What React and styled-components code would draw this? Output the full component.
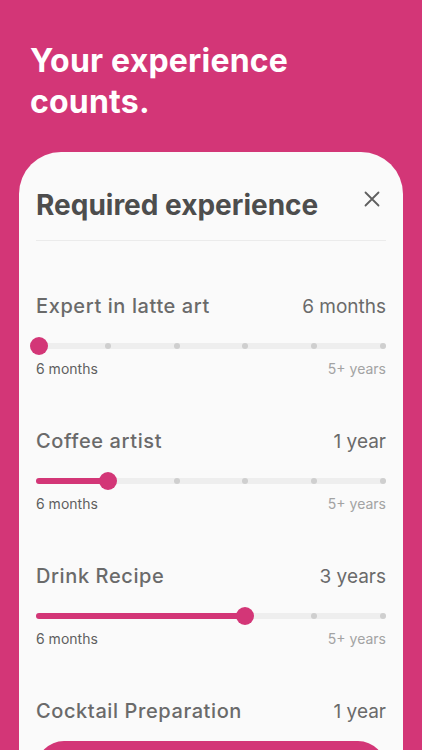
import React from "react";
import styled, { createGlobalStyle } from "styled-components";

const GlobalStyle = createGlobalStyle`
    html, body {
        margin: 0;
        padding: 0;
        background: #d33677;
        overflow: hidden;
    }
    * {
        box-sizing: border-box;
    }
`;

const Screen = styled.div`
    width: 422px;
    height: 750px;
    overflow: hidden;
    background: #d33677;
    font-family: Inter, "Noto Sans", sans-serif;
`;

const Hero = styled.h1`
    margin: 0;
    padding: 40px 30px 0;
    color: #fff;
    font-size: 32px;
    line-height: 41px;
    font-weight: 700;
    letter-spacing: 0.2px;
`;

const Sheet = styled.div`
    margin: 30px 19px 0;
    padding: 35px 17px 0;
    background: #fafafa;
    border-radius: 42px 42px 0 0;
    min-height: 620px;
`;

const SheetHeader = styled.div`
    display: flex;
    align-items: center;
    justify-content: space-between;
    padding-bottom: 17px;
    border-bottom: 1px solid #ebebeb;
`;

const SheetTitle = styled.h2`
    margin: 0;
    font-size: 28px;
    line-height: 36px;
    font-weight: 700;
    color: #4d4d4d;
`;

const CloseButton = styled.button`
    border: 0;
    background: none;
    padding: 0;
    margin: -12px 4px 0 0;
    width: 20px;
    height: 20px;
    color: #5f5f5f;
    display: flex;
    align-items: center;
    justify-content: center;
`;

const List = styled.div`
    display: flex;
    flex-direction: column;
    gap: 51px;
    padding-top: 53px;
`;

const Skill = styled.div`
    display: flex;
    flex-direction: column;
`;

const SkillRow = styled.div`
    display: flex;
    justify-content: space-between;
    align-items: center;
    height: 24px;
    color: #6a6a6a;
`;

const SkillName = styled.span`
    font-size: 20px;
    font-weight: 500;
    letter-spacing: 0.6px;
`;

const SkillValue = styled.span`
    font-size: 19px;
    font-weight: 400;
`;

const Track = styled.div`
    position: relative;
    margin-top: 19px;
    height: 18px;
    display: flex;
    align-items: center;
`;

const Rail = styled.div`
    position: relative;
    width: 100%;
    height: 6px;
    border-radius: 3px;
    background: #eeeeee;
    display: flex;
    justify-content: space-between;
    align-items: center;
`;

const Fill = styled.div`
    position: absolute;
    left: 0;
    top: 0;
    height: 6px;
    border-radius: 3px;
    background: #d33677;
`;

const Tick = styled.span`
    width: 6px;
    height: 6px;
    border-radius: 50%;
    background: ${(p) => (p.$hidden ? "transparent" : "#cfcfcf")};
`;

const Thumb = styled.span`
    position: absolute;
    top: 50%;
    width: 18px;
    height: 18px;
    margin: -9px 0 0 -9px;
    border-radius: 50%;
    background: #d33677;
`;

const Range = styled.div`
    display: flex;
    justify-content: space-between;
    margin-top: 5px;
    font-size: 14px;
    line-height: 18px;
`;

const RangeMin = styled.span`
    color: #5f5f5f;
`;

const RangeMax = styled.span`
    color: #a3a3a3;
`;

const CtaButton = styled.button`
    margin-top: 18px;
    width: 100%;
    height: 56px;
    border: 0;
    border-radius: 28px;
    background: #d33677;
`;

const skills = [
    { name: "Expert in latte art", value: "6 months", step: 0 },
    { name: "Coffee artist", value: "1 year", step: 1 },
    { name: "Drink Recipe", value: "3 years", step: 3 },
];

const STEPS = 5;

const Slider = ({ step }) => {
    const pos = `calc(3px + (100% - 6px) * ${step / STEPS})`;
    return (
        <Track>
            <Rail>
                {step > 0 && <Fill style={{ width: pos }} />}
                {Array.from({ length: STEPS + 1 }).map((_, i) => (
                    <Tick key={i} $hidden={i <= step} />
                ))}
            </Rail>
            <Thumb style={{ left: pos }} />
        </Track>
    );
};

const App = () => {
    return (
        <Screen>
            <GlobalStyle />
            <Hero>
                Your experience
                <br />
                counts.
            </Hero>
            <Sheet>
                <SheetHeader>
                    <SheetTitle>Required experience</SheetTitle>
                    <CloseButton aria-label="Close">
                        <svg width="16" height="16" viewBox="0 0 16 16">
                            <path
                                d="M1.5 1.5 L14.5 14.5 M14.5 1.5 L1.5 14.5"
                                stroke="currentColor"
                                strokeWidth="1.8"
                                strokeLinecap="round"
                            />
                        </svg>
                    </CloseButton>
                </SheetHeader>
                <List>
                    {skills.map((s) => (
                        <Skill key={s.name}>
                            <SkillRow>
                                <SkillName>{s.name}</SkillName>
                                <SkillValue>{s.value}</SkillValue>
                            </SkillRow>
                            <Slider step={s.step} />
                            <Range>
                                <RangeMin>6 months</RangeMin>
                                <RangeMax>5+ years</RangeMax>
                            </Range>
                        </Skill>
                    ))}
                    <Skill>
                        <SkillRow>
                            <SkillName>Cocktail Preparation</SkillName>
                            <SkillValue>1 year</SkillValue>
                        </SkillRow>
                    </Skill>
                </List>
                <CtaButton />
            </Sheet>
        </Screen>
    );
};

export default App;
